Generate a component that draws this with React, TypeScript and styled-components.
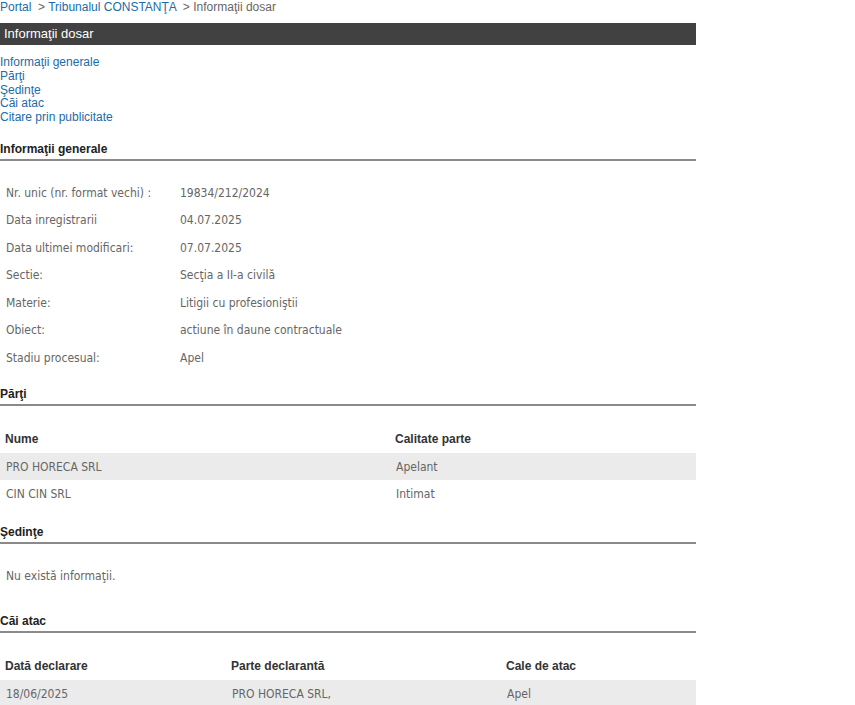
import React from 'react';
import styled, { createGlobalStyle } from 'styled-components';

const GlobalStyle = createGlobalStyle`
  body {
    margin: 0;
    background: #fff;
    font-family: 'Liberation Sans', Arial, sans-serif;
  }
`;

const Page = styled.div`
  width: 696px;
`;

const Breadcrumb = styled.div`
  font-size: 12px;
  line-height: 14px;
  color: #666;
  white-space: pre;
`;

const Crumb = styled.a`
  color: #1b6ca8;
  text-decoration: none;
`;

const TitleBar = styled.div`
  margin-top: 9px;
  height: 22px;
  line-height: 22px;
  background: #414141;
  color: #fff;
  font-size: 13px;
  padding-left: 4px;
`;

const NavList = styled.ul`
  list-style: none;
  margin: 11px 0 0;
  padding: 0;
  font-size: 12px;
  line-height: 13.75px;

  a {
    color: #1b6ca8;
    text-decoration: none;
  }
`;

const SectionHeading = styled.h3<{ $top: number }>`
  margin: ${(p) => p.$top}px 0 0;
  font-size: 12px;
  font-weight: bold;
  color: #222;
  line-height: 14px;
  padding-bottom: 3px;
  border-bottom: 2px solid #8a8a8a;
`;

const InfoGrid = styled.div`
  margin-top: 18px;
  display: grid;
  grid-template-columns: 174px 1fr;
  grid-auto-rows: 27.5px;
  align-items: center;
  font-family: 'DejaVu Sans Condensed', Tahoma, sans-serif;
  font-size: 12px;
  color: #666;
`;

const InfoLabel = styled.div`
  padding-left: 6px;
`;

const InfoValue = styled.div`
  padding-left: 6px;
`;

const Table = styled.div<{ $cols: string }>`
  margin-top: 18px;
  display: grid;
  grid-template-columns: ${(p) => p.$cols};
`;

const HeadCell = styled.div`
  height: 29px;
  display: flex;
  align-items: center;
  padding-left: 5px;
  font-family: 'Liberation Sans', Arial, sans-serif;
  font-weight: bold;
  font-size: 12px;
  color: #333;
`;

const Cell = styled.div<{ $shade: boolean }>`
  height: 27px;
  display: flex;
  align-items: center;
  padding-left: 6px;
  background: ${(p) => (p.$shade ? '#ebebeb' : 'transparent')};
  font-family: 'DejaVu Sans Condensed', Tahoma, sans-serif;
  font-size: 12px;
  color: #666;
`;

const Empty = styled.p`
  margin: 25px 0 0 6px;
  font-family: 'DejaVu Sans Condensed', Tahoma, sans-serif;
  font-size: 12px;
  color: #666;
  line-height: 14px;
`;

const info: [string, string][] = [
  ['Nr. unic (nr. format vechi) :', '19834/212/2024'],
  ['Data inregistrarii', '04.07.2025'],
  ['Data ultimei modificari:', '07.07.2025'],
  ['Sectie:', 'Secţia a II-a civilă'],
  ['Materie:', 'Litigii cu profesioniştii'],
  ['Obiect:', 'actiune în daune contractuale'],
  ['Stadiu procesual:', 'Apel'],
];

const parti = [
  ['PRO HORECA SRL', 'Apelant'],
  ['CIN CIN SRL', 'Intimat'],
];

const caiAtac = [['18/06/2025', 'PRO HORECA SRL,', 'Apel']];

function DataTable({ cols, head, rows }: { cols: string; head: string[]; rows: string[][] }) {
  return (
    <Table $cols={cols}>
      {head.map((h) => (
        <HeadCell key={h}>{h}</HeadCell>
      ))}
      {rows.map((r, i) =>
        r.map((c, j) => (
          <Cell key={`${i}-${j}`} $shade={i % 2 === 0}>
            {c}
          </Cell>
        ))
      )}
    </Table>
  );
}

export default function App() {
  return (
    <Page>
      <GlobalStyle />
      <Breadcrumb>
        <Crumb href="#">Portal</Crumb>
        {'  > '}
        <Crumb href="#">Tribunalul CONSTANŢA</Crumb>
        {'  > Informaţii dosar'}
      </Breadcrumb>
      <TitleBar>Informaţii dosar</TitleBar>
      <NavList>
        <li><a href="#">Informaţii generale</a></li>
        <li><a href="#">Părţi</a></li>
        <li><a href="#">Şedinţe</a></li>
        <li><a href="#">Căi atac</a></li>
        <li><a href="#">Citare prin publicitate</a></li>
      </NavList>

      <SectionHeading $top={17}>Informaţii generale</SectionHeading>
      <InfoGrid>
        {info.map(([k, v]) => (
          <React.Fragment key={k}>
            <InfoLabel>{k}</InfoLabel>
            <InfoValue>{v}</InfoValue>
          </React.Fragment>
        ))}
      </InfoGrid>

      <SectionHeading $top={16}>Părţi</SectionHeading>
      <DataTable cols="390px 1fr" head={['Nume', 'Calitate parte']} rows={parti} />

      <SectionHeading $top={18}>Şedinţe</SectionHeading>
      <Empty>Nu există informaţii.</Empty>

      <SectionHeading $top={31}>Căi atac</SectionHeading>
      <DataTable
        cols="226px 275px 1fr"
        head={['Dată declarare', 'Parte declarantă', 'Cale de atac']}
        rows={caiAtac}
      />
    </Page>
  );
}
